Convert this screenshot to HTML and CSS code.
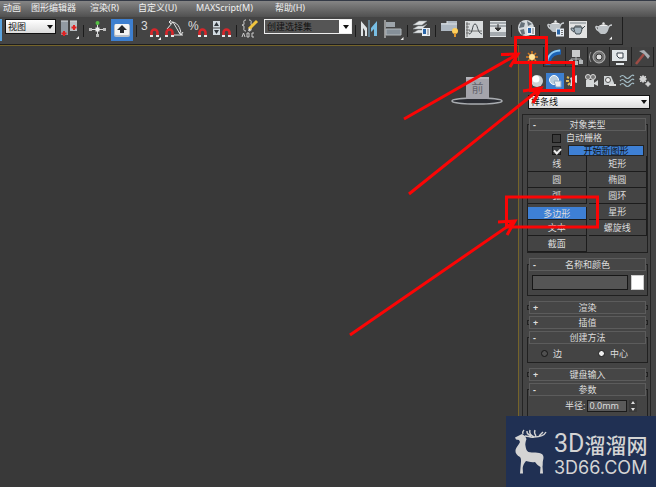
FILE: index.html
```html
<!DOCTYPE html>
<html lang="zh-CN">
<head>
<meta charset="utf-8">
<title>3ds Max</title>
<link rel="stylesheet" href="styles.css">
</head>
<body>
<svg class="defs" aria-hidden="true">
  <symbol id="magnet" viewBox="0 0 9 9"><path d="M1.500 8V4.500a3 3 0 0 1 6 0V8" fill="none" stroke="#d8262a" stroke-width="2.600"/><path d="M0 7h3v2H0zM6 7h3v2H6z" fill="#e6e6e6"/></symbol>
  <symbol id="corner" viewBox="0 0 4 4"><path d="M4 0v4H0z" fill="#f2f2f2"/></symbol>
  <symbol id="teapot" viewBox="0 0 18 14"><path d="M4 5c-3-2-3 2 1 4M14 6c1-3 3-3 4-3" fill="none" stroke="#c9cdd0" stroke-width="1.500"/><path d="M4 4h11c0 4-2 7-4 8H7C5 11 3 8 4 4z" fill="#bfc4c8"/><path d="M5 4c1-2 8-2 9 0z" fill="#f0f0f0"/><circle cx="9.500" cy="1.500" r="1.200" fill="#e7e7e7"/></symbol>
  <symbol id="badge" viewBox="0 0 8 8"><path d="M0 0h8v8H0z" fill="#e8eef4"/><path d="M1 1h3v5H1z" fill="#2b66a8"/><path d="M5 2h2M5 4h2M5 6h2" stroke="#777"/></symbol>
</svg>

<nav class="menu">
  <a href="#">动画</a><a href="#">图形编辑器</a><a href="#">渲染(R)</a><a href="#">自定义(U)</a><a href="#">MAXScript(M)</a><a href="#">帮助(H)</a>
</nav>

<div class="toolbar">
  <span class="edge"></span>
  <span class="combo coord"><select aria-label="参考坐标系"><option>视图</option></select></span>
  <button class="tool" aria-label="使用轴点中心"><svg viewBox="0 0 21 22"><path d="M2 2h7v14H2z" fill="#929aa2"/><path d="M11 2h7v10h-7z" fill="#b9bec2"/><path d="M2 2h7M11 2h7" stroke="#d9dde0"/><path d="M5 12v5M2.500 14.500h5M15 6v5M12.500 8.500h5" stroke="#e02222" stroke-width="2"/><use href="#corner" x="17" y="17" width="3" height="3"/></svg></button>
  <i class="sep"></i>
  <button class="tool" aria-label="选择并操纵"><svg viewBox="0 0 21 22"><path d="M10.500 3v14M4 10.500h13" stroke="#ddd"/><path d="M8.500 8.500h4v4h-4z" fill="#eee"/><path d="M9 15h3v3H9zM2 9h3v3H2zM16 9h3v3h-3z" fill="#bbb"/><circle cx="10.500" cy="4" r="2" fill="#53c043"/></svg></button>
  <button class="tool active" aria-label="键盘快捷键覆盖切换"><svg viewBox="0 0 22 22"><rect x="3" y="5" width="16" height="13" rx="2" fill="#b9c0c8"/><rect x="4" y="5" width="14" height="11" rx="1" fill="#f3f3f3"/><path d="M11 6l5 5h-3v3H9v-3H6z" fill="#26282b"/></svg></button>
  <i class="sep"></i>
  <button class="tool" aria-label="捕捉开关"><svg viewBox="0 0 21 22"><text x="1" y="11" class="glyph">3</text><use href="#magnet" x="10" y="9" width="9" height="9"/><use href="#corner" x="18" y="18" width="3" height="3"/></svg></button>
  <button class="tool" aria-label="角度捕捉切换"><svg viewBox="0 0 21 22"><path d="M3 10l6-7M6 3c7-1 11 6 11 13M9 3l7 12M10 16h9M7 1L5 3l2 2M15 13l2 3 2-3" fill="none" stroke="#e3e3e3"/><use href="#magnet" x="1" y="9" width="9" height="9"/></svg></button>
  <button class="tool" aria-label="百分比捕捉切换"><svg viewBox="0 0 21 22"><text x="0" y="11" class="glyph">%</text><use href="#magnet" x="10" y="9" width="9" height="9"/></svg></button>
  <button class="tool" aria-label="微调器捕捉切换"><svg viewBox="0 0 21 22"><path d="M1 2h7v14H1z" fill="#d2dae0"/><path d="M1 9h7" stroke="#444"/><path d="M2 7l2.500-4L7 7zM2 11l2.500 4L7 11z" fill="#30353a"/><use href="#magnet" x="10" y="9" width="9" height="9"/></svg></button>
  <i class="sep"></i>
  <button class="tool" aria-label="编辑命名选择集"><svg viewBox="0 0 21 22"><path d="M6 1c-3 0-2 2-2 4 0 1-1 1-2 1 1 0 2 1 2 2 0 2-1 4 2 4M9 1c3 0 2 2 2 4 0 1 1 1 2 1-1 0-2 1-2 2 0 2 1 4-2 4" fill="none" stroke="#ddd"/><path d="M9 10l8-8" stroke="#efc33e" stroke-width="3"/><path d="M8 12l1-3 2 2z" fill="#eee"/><path d="M2 18l1.500-4L5 18M7 14v4h2v-4zM14 14h-2v4h2" fill="none" stroke="#ccc"/></svg></button>
  <span class="combo sets"><select aria-label="命名选择集"><option>创建选择集</option></select></span>
  <i class="sep"></i>
  <button class="tool" aria-label="镜像"><svg viewBox="0 0 21 22"><path d="M2 17V2l6 7V2v15H6v-5L4 9v8z" fill="#dfe3e5"/><path d="M10 1v17" stroke="#7fb6d6"/><path d="M18 17V2l-6 7v4l3-3v7z" fill="#78bde2"/></svg></button>
  <button class="tool" aria-label="对齐"><svg viewBox="0 0 21 22"><path d="M2 1v18" stroke="#e6e6e6"/><path d="M3 3h9v5H3z" fill="#9ea5ab"/><path d="M3 10h15v6H3z" fill="#858f98" stroke="#b1b7bb"/><use href="#corner" x="17" y="18" width="4" height="3"/></svg></button>
  <i class="sep"></i>
  <button class="tool" aria-label="层管理器"><svg viewBox="0 0 21 22"><path d="M2 6l6-4h8l-5 4zM2 10l5-3h5l4-2-5 5zM2 14l5-3h5l3-1-4 4z" fill="#e4e6e7" stroke="#8f9598" stroke-width=".5"/><use href="#badge" x="11" y="9" width="8" height="8"/></svg></button>
  <i class="sep"></i>
  <button class="tool" aria-label="功能区"><svg viewBox="0 0 21 22"><path d="M2 4h6V2h10v10H2z" fill="#aeb8c2"/><path d="M2 5h16M8 2v3" stroke="#dce1e5"/><circle cx="16" cy="12" r="3" fill="#ffd05b"/><path d="M15 14h2v4h-2z" fill="#dd942c"/></svg></button>
  <button class="tool" aria-label="曲线编辑器"><svg viewBox="0 0 21 22"><path d="M2 2h18v17H2z" fill="#d9dcdd"/><path d="M4 3v15M3 5h4M3 8h3M3 11h4M3 14h3M6 12h13" stroke="#555" stroke-width=".8"/><path d="M6 15C10 15 9 5 12 5s2 9 7 10" fill="none" stroke="#454b50"/></svg></button>
  <button class="tool" aria-label="图解视图"><svg viewBox="0 0 21 22"><path d="M3 2h16v16H3z" fill="#e0e3e4"/><path d="M3 4h16M3 7h16M3 14h16M3 16h16" stroke="#697078"/><path d="M11 5v5M8 9l3 3 3-3z" stroke="#333" fill="#333"/></svg></button>
  <i class="sep"></i>
  <button class="tool" aria-label="材质编辑器"><svg viewBox="0 0 21 22"><circle cx="11" cy="9" r="8" fill="#d5dadd"/><path d="M6 3l4 1-1 4-5 1zM12 2l5 3-4 2zM5 11l4-1 1 5-3 1zM13 8l5 1-2 4z" fill="#66717a"/><use href="#badge" x="12" y="8" width="8" height="8"/></svg></button>
  <i class="sep"></i>
  <button class="tool" aria-label="渲染设置"><svg viewBox="0 0 21 22"><use href="#teapot" x="3" y="1" width="18" height="14"/><use href="#badge" x="13" y="9" width="8" height="9"/></svg></button>
  <button class="tool" aria-label="渲染帧窗口"><svg viewBox="0 0 21 22"><path d="M2 2h18v17H2z" fill="#e2e2e2"/><path d="M3 3h16v2H3z" fill="#aeb3b6"/><path d="M7 8h8c0 4-1 6-2 7H9C8 14 7 12 7 8zM7 10c-4-3-4 1 0 3M15 10l3-3M8 7h6" fill="#a6b5bf" stroke="#3d464c"/></svg></button>
  <button class="tool" aria-label="渲染产品"><svg viewBox="0 0 21 22"><use href="#teapot" x="3" y="3" width="18" height="14"/><use href="#corner" x="18" y="17" width="3" height="4"/></svg></button>
</div>

<main class="workspace">
  <section class="viewport" aria-label="视口">
    <svg class="cube" viewBox="0 0 56 32"><ellipse cx="28" cy="26" rx="25" ry="3" fill="#2b2d33" stroke="#a9acb0" stroke-width="1.500"/><path d="M17 2h23v22H17z" fill="#a4a4ab"/><path d="M17 2h23v2H17z" fill="#b6b6bc"/><text x="28.500" y="18">前</text></svg>
  </section>

  <aside class="panel">
    <div class="tabs">
      <button class="on" aria-label="创建"><svg viewBox="0 0 20 18"><path d="M10 3v12M4 9h12M6 5l8 8M14 5l-8 8" stroke="#d57b20" stroke-width="1.500"/><circle cx="10" cy="9" r="3" fill="#ffe49b"/></svg></button>
      <button aria-label="修改"><svg viewBox="0 0 20 18"><path d="M4 17C4 8 9 4 17 4" fill="none" stroke="#1d63b5" stroke-width="5"/><path d="M3 16C3 8 8 3 16 2.500" fill="none" stroke="#8fcdf5" stroke-width="2"/></svg></button>
      <button aria-label="层次"><svg viewBox="0 0 20 18"><path d="M6 2h8v7H6z" fill="#c9cbcc"/><path d="M10 9v8M5 14v-3h10v3" fill="none" stroke="#b5b8ba"/><path d="M3 12h4v4H3zM8 13h4v4H8zM13 12h4v4h-4z" fill="#b5b8ba"/></svg></button>
      <button aria-label="运动"><svg viewBox="0 0 20 18"><circle cx="11" cy="9" r="6" fill="#777" stroke="#bcbcbc"/><circle cx="11" cy="9" r="3" fill="#ddd" stroke="#333"/><path d="M3 4c-2 3-2 7 0 10" fill="none" stroke="#999"/></svg></button>
      <button aria-label="显示"><svg viewBox="0 0 20 18"><path d="M2 2h15v11H2zM6 15h8v2H6z" fill="#e1e6e9"/><path d="M7 5h6v5H9L7 8z" fill="#f8f8f8" stroke="#37414a"/></svg></button>
      <button aria-label="实用程序"><svg viewBox="0 0 20 18"><path d="M12 6L4 16" stroke="#9e4c45" stroke-width="2.500"/><path d="M7 3l5-1 6 6-2 3-4-5z" fill="#a8adb1"/></svg></button>
    </div>
    <div class="kinds">
      <button aria-label="几何体"><svg viewBox="0 0 16 16"><circle cx="8" cy="8" r="6" fill="#ccd1d3"/><circle cx="7" cy="6" r="3.500" fill="#fff"/></svg></button>
      <button class="on" aria-label="图形"><svg viewBox="0 0 16 16"><circle cx="7" cy="7" r="4.500" fill="#b9cddd" stroke="#fff"/><path d="M7 8h7v6H9z" fill="#e9eef2" stroke="#8fa9c0"/></svg></button>
      <button aria-label="灯光"><svg viewBox="0 0 16 16"><path d="M5 5l7-3v8l-3-1-1 4H5l1-5z" fill="#d8dadb"/><path d="M2 4l2 1M1 8h3M3 12l2-2" stroke="#e2bb54" stroke-width="2"/></svg></button>
      <button aria-label="摄影机"><svg viewBox="0 0 16 16"><path d="M3 7h8v7H3zM11 10l4-3v6l-4-2z" fill="#d5d8d9"/><circle cx="5" cy="4" r="2.500" fill="#777" stroke="#ddd"/><circle cx="10" cy="4" r="2.500" fill="#777" stroke="#ddd"/></svg></button>
      <button aria-label="辅助对象"><svg viewBox="0 0 16 16"><path d="M3 3h7l3 7v2H3z" fill="#d0d4d6"/><circle cx="7" cy="7" r="2.500" fill="#eee" stroke="#555"/><path d="M8 12h7" stroke="#ddd" stroke-width="2"/></svg></button>
      <button aria-label="空间扭曲"><svg viewBox="0 0 16 16"><path d="M1 4q2.500-3 5 0t5 0 4-1M1 8q2.500-3 5 0t5 0 4-1M1 12q2.500-3 5 0t5 0 4-1" fill="none" stroke="#a4bdc6" stroke-width="1.200"/></svg></button>
      <button aria-label="系统"><svg viewBox="0 0 16 16"><circle cx="6" cy="6" r="3" fill="#d9dadb"/><circle cx="11" cy="11" r="2" fill="#d9dadb"/><path d="M6 2v8M2 6h8M3 3l6 6M9 3L3 9M11 8v6M8 11h6" stroke="#cfcfcf"/></svg></button>
    </div>
    <span class="combo type"><select aria-label="图形类型"><option>样条线</option></select></span>

    <div class="rollouts">
      <section class="rollout">
        <button class="head"><b>-</b>对象类型</button>
        <div class="checks">
          <label><input type="checkbox"><span>自动栅格</span></label>
          <label><input type="checkbox" checked><span class="start">开始新图形</span></label>
        </div>
        <div class="types">
          <button>线</button><button>矩形</button>
          <button>圆</button><button>椭圆</button>
          <button>弧</button><button>圆环</button>
          <button class="on">多边形</button><button>星形</button>
          <button>文本</button><button>螺旋线</button>
          <button>截面</button>
        </div>
      </section>
      <section class="rollout">
        <button class="head"><b>-</b>名称和颜色</button>
        <div class="name"><input type="text" aria-label="名称"><button aria-label="颜色"></button></div>
      </section>
      <section class="rollout closed"><button class="head"><b>+</b>渲染</button></section>
      <section class="rollout closed"><button class="head"><b>+</b>插值</button></section>
      <section class="rollout">
        <button class="head"><b>-</b>创建方法</button>
        <div class="method">
          <label><input type="radio" name="method">边</label>
          <label><input type="radio" name="method" checked>中心</label>
        </div>
      </section>
      <section class="rollout closed"><button class="head"><b>+</b>键盘输入</button></section>
      <section class="rollout">
        <button class="head"><b>-</b>参数</button>
        <div class="params">
          <label for="radius">半径:</label><input id="radius" type="text" value="0.0mm">
          <button class="spin" aria-label="调整半径"><svg viewBox="0 0 8 12"><path d="M2 4l2-3 2 3zM2 8l2 3 2-3z" fill="#ddd"/></svg></button>
        </div>
      </section>
    </div>
  </aside>
</main>

<svg class="marks" viewBox="0 0 656 487" aria-hidden="true">
  <path d="M515.500 37.500h31v25h-31zM530.500 62.500h43v28h-43zM506.500 197h91v30h-91z"/>
  <path d="M404 119L518 54M501 54.500l17-.5-8 13M409 194L541 88M523 91l18-3-8 15M350 335L514 222M498 222l17-1-8 14"/>
</svg>

<footer class="brand">
  <svg viewBox="0 0 36 48"><path d="M1 9.500L6 7l2-1 3 2 1.500 3c-1 3-1.500 5-1 7 .5 3 1 5 3 6 4 1 10-.5 14 2.500 1.500 2 1 4 .5 6-.5 2 0 4-.5 6l.5 7h-3l.5-6.500c-2-1-4-3-5.500-5-3 .5-6 0-9-1-2 2-3 5-3.300 7l.3 5.500H6l1-12c0-2 0-3-1-4.500C3 27.500 1 25 1.500 22 2 19 5 17 6 14l-1-2-3-.5z" fill="#d4d4d4"/><path d="M11 8c4 0 5 2 9 1 6 0 10-1 12-5M25 8l4-4M20 9c-4-2-5-4-4-7M17 8c-4-2-4-3-4-5M22 8c-2-3-2-4-1-6M9 6c-1-2 0-3 1-4" fill="none" stroke="#d4d4d4" stroke-width="1.400"/></svg>
  <div class="words"><p class="cn"><span>3D</span>溜溜网</p><p class="url">3D66.COM</p></div>
</footer>
</body>
</html>
```
FILE: styles.css
```css
* { box-sizing: border-box; }

body {
  margin: 0;
  min-height: 100vh;
  position: relative;
  display: flex;
  flex-direction: column;
  overflow: hidden;
  background: #444;
  color: #ddd;
  font: 9px/12px "Noto Sans", "Noto Sans CJK SC", sans-serif;
}

button, input, select { font: inherit; color: inherit; margin: 0; padding: 0; border: 0; border-radius: 0; background: none; }
svg { display: block; }
p { margin: 0; }
.defs { position: absolute; width: 0; height: 0; }

.menu {
  display: grid;
  grid-template-columns: 28px 59px 48px 58px 79px 1fr;
  height: 17px;
  padding: 0 3px;
  border-top: 1px solid #343a46;
  background: linear-gradient(#858585, #505050);
  line-height: 14px;
}
.menu a { color: #f0f0f0; text-decoration: none; white-space: nowrap; }

.toolbar {
  display: flex;
  align-items: flex-start;
  gap: 3px;
  align-self: flex-start;
  height: 28px;
  padding: 2px 10px 0 0;
  border: solid #1e1e1e;
  border-width: 0 1px 1px 0;
}
.edge { width: 2px; height: 22px; background: #5ba3dd; }
.tool { flex: none; width: 21px; height: 22px; }
.tool svg { width: 100%; height: 22px; }
.tool.active { width: 22px; background: #3d7fd0; }
.sep { width: 1px; height: 12px; margin-top: 6px; background: #1c1c1c; }
.glyph { fill: #ddd; font: 12px "Liberation Sans", sans-serif; }

.combo { position: relative; display: block; flex: none; height: 15px; }
.combo select {
  display: block;
  width: 100%;
  height: 100%;
  padding-left: 2px;
  border: 1px solid #111;
  background: linear-gradient(#fff, #dcdcdc);
  color: #111;
  appearance: none;
}
.combo::after {
  content: "";
  position: absolute;
  right: 3px;
  top: 6px;
  border: solid transparent;
  border-width: 4px 3px 0;
  border-top-color: #111;
}
.coord { width: 51px; }
.sets { width: 88px; }
.sets select { background: linear-gradient(90deg, #555 74px, #fff 74px); border: 1px solid #eee; }

.workspace { flex: 1; display: grid; grid-template-columns: 1fr 137px; }
.viewport {
  padding: 29px 13px 0 0;
  border: solid #75642a;
  border-width: 1px 1px 0 0;
  background: #393939;
}
.cube { width: 56px; height: 32px; margin-left: auto; }
.cube text { fill: #66666e; font-size: 12px; text-anchor: middle; }

.panel { padding: 0 5px 0 3px; }
.tabs { display: grid; grid-template-columns: repeat(6, 22px); height: 22px; padding-top: 2px; }
.tabs button { border-right: 1px solid #222; border-bottom: 1px solid #2c2c2c; background: #414141; }
.tabs button.on { border-bottom: 0; background: #444; }
.tabs svg { width: 20px; height: 18px; }
.kinds { display: grid; grid-template-columns: repeat(7, 18px); height: 16px; margin: 6px 0 0 6px; }
.kinds svg { width: 16px; height: 16px; margin: auto; }
.kinds .on { background: #3d7fd0; }
.type { height: 14px; margin: 6px 1px 5px 6px; }
.type::after { top: 5px; }

.rollouts { padding: 3px 2px 0 4px; border: solid #242424; border-width: 1px 1px 0; }
.rollout { position: relative; margin-bottom: 5px; }
.rollout.closed { margin-bottom: 2px; }
.rollout::before { content: ""; position: absolute; inset: 6px 0 0; border: 1px solid #202020; z-index: -1; }
.rollout.closed::before { inset: 4px 0; }
.head {
  position: relative;
  display: block;
  width: calc(100% - 4px);
  height: 13px;
  margin: 0 2px;
  border: 1px solid #5c5c5c;
  background: #464646;
  line-height: 11px;
}
.head b { position: absolute; left: 3px; }

.checks { display: grid; grid-auto-rows: 12px; padding: 1px 4px 0 25px; }
.checks label { display: flex; align-items: center; gap: 5px; }
.checks input { position: relative; width: 9px; height: 9px; border: 1px solid #161616; background: #3b3b3b; appearance: none; }
.checks input:checked::after {
  content: "";
  position: absolute;
  left: 2px;
  top: 0;
  width: 3px;
  height: 5px;
  border: solid #eee;
  border-width: 0 2px 2px 0;
  transform: rotate(45deg);
}
.checks .start { flex: 1; height: 11px; margin-left: 2px; border: 1px solid #222; background: #3e80d5; color: #111; line-height: 9px; text-align: center; }

.types { display: grid; grid-template-columns: 1fr 1fr; grid-auto-rows: 16px; column-gap: 2px; padding: 0 1px 1px; }
.types button { border: solid #1c1c1c; border-width: 0 1px 1px 0; line-height: 14px; }
.types .on { margin-top: 3px; background: #3e80d5; line-height: 11px; }

.name { display: flex; gap: 3px; padding: 4px 4px 6px 5px; }
.name input { flex: 1; min-width: 0; height: 15px; border: 1px solid #171717; background: #555; }
.name button { width: 13px; height: 15px; background: #fff; border: 1px solid #ccc; }

.method { display: flex; gap: 36px; height: 19px; padding-left: 14px; }
.method label { display: flex; align-items: center; gap: 5px; }
.method input { width: 7px; height: 7px; border: 1px solid #161616; border-radius: 50%; background: #505050; appearance: none; }
.method input:checked { background: #eee; }

.params { display: flex; align-items: center; gap: 2px; height: 48px; padding: 4px 0 32px 38px; white-space: nowrap; }
.params input { width: 40px; height: 12px; padding-left: 1px; border: 1px solid #1b1b1b; background: #5a5a5a; }
.spin { background: #3a3a3a; }
.spin svg { width: 8px; height: 12px; }

.marks { position: absolute; top: 0; right: 0; width: 656px; height: 487px; fill: none; stroke: #fb0505; stroke-width: 3px; pointer-events: none; }

.brand {
  position: absolute;
  right: 0;
  bottom: 0;
  display: flex;
  gap: 4px;
  width: 150px;
  height: 71px;
  padding: 12px 0 0 8px;
  background: #203053;
  color: #d4d4d4;
}
.brand svg { width: 36px; height: 48px; flex: none; }
.words { padding-top: 3px; white-space: nowrap; }
.cn { display: flex; font: 500 21px/26px "Noto Sans CJK SC", sans-serif; }
.cn span { font: 25px/26px Roboto, sans-serif; }
.url { font: 18px/22px Inter, sans-serif; }
```
